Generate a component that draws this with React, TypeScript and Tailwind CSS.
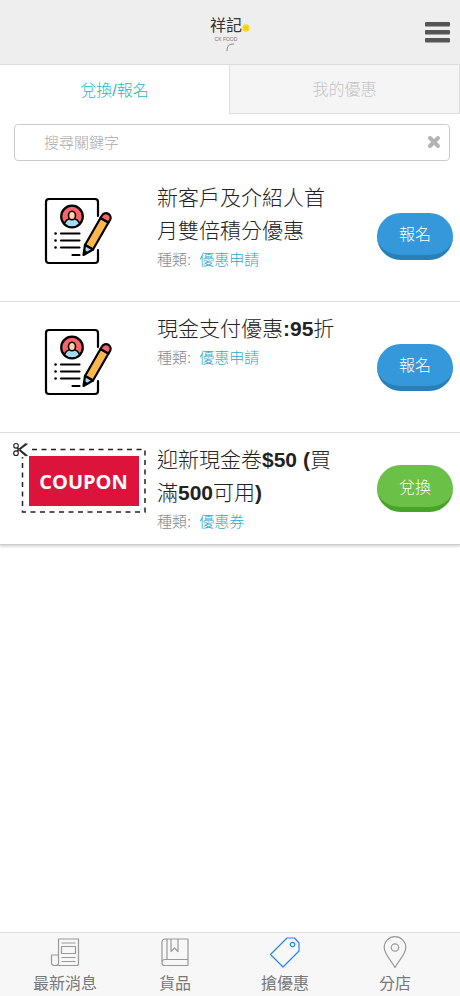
import type { ReactNode } from 'react';

interface Offer {
  id: number;
  title: string;
  category: string;
  action: string;
  kind: 'form' | 'coupon';
}

const offers: Offer[] = [
  { id: 1, title: '新客戶及介紹人首月雙倍積分優惠', category: '優惠申請', action: '報名', kind: 'form' },
  { id: 2, title: '現金支付優惠:95折', category: '優惠申請', action: '報名', kind: 'form' },
  { id: 3, title: '迎新現金卷$50 (買滿500可用)', category: '優惠券', action: '兌換', kind: 'coupon' },
];

function Logo() {
  return (
    <div className="relative mt-2 flex flex-col items-center pr-2">
      <span className="text-base leading-4 font-normal text-[#333]">祥記</span>
      <span className="mt-0.5 text-[5px] leading-[6px] text-[#777]">CK FOOD</span>
      <svg className="h-3 w-8" viewBox="0 0 32 12" fill="none" stroke="#888">
        <path d="M17 9c0-5 2-7 7-7" />
      </svg>
      <svg className="absolute top-1.5 right-0 h-2 w-2" viewBox="0 0 8 8">
        <circle cx="4" cy="4" r="3.7" fill="#fadb1e" />
        <path d="M2 3h4M2.5 5h3M3 3v3M5 3v3" stroke="#e5b800" strokeWidth=".5" />
      </svg>
    </div>
  );
}

function FormIcon() {
  return (
    <svg className="h-[68px] w-[68px]" viewBox="0 0 68 68" fill="none" stroke="#000" strokeWidth="2.2" strokeLinecap="round" strokeLinejoin="round">
      <path d="M54 19V5a3 3 0 0 0-3-3H5a3 3 0 0 0-3 3v58a3 3 0 0 0 3 3h46a3 3 0 0 0 3-3V53" />
      <circle cx="28" cy="19.5" r="10.8" fill="#f8646a" />
      <path d="M20.5 27c1-4 4-5.5 7.5-5.5s6.500 1.500 7.500 5.500c-4 4-11 4-15 0z" fill="#a5dbf5" strokeWidth="1.6" />
      <ellipse cx="28" cy="18.5" rx="3.5" ry="4.3" fill="#ffd5a5" strokeWidth="1.6" />
      <path d="M17 36.5h18.5M17 43.5h18.5M17 50.5h18.5M28.5 58h7" />
      <path d="M11.5 36.5h.1M11.5 43.5h.1M11.5 50.5h.1" strokeWidth="2.6" />
      <path d="M41 48l15.5-27 8 4.5-15.5 27z" fill="#fab84c" />
      <path d="M56.5 21l1.5-2.5a4.5 4.500 0 0 1 8 4.500L64.500 25.500z" fill="#f8646a" />
      <path d="M41 48l-1.5 10 9.5-5.5z" fill="#a5dbf5" />
      <path d="M39.8 57.5l1-4 2.5 2z" fill="#000" strokeWidth="1" />
    </svg>
  );
}

function CouponIcon() {
  return (
    <svg className="h-[74px] w-[136px]" viewBox="0 0 136 74" fill="none">
      <rect x="10.5" y="8.5" width="122.5" height="62.5" stroke="#222" strokeWidth="1.5" strokeDasharray="5 4.5" />
      <rect width="18" height="16" fill="#fff" />
      <rect x="17" y="15" width="110" height="50" fill="#dc143c" />
      <text x="71.5" y="47.5" fill="#fff" fontFamily="Open Sans" fontSize="20" fontWeight="700" textAnchor="middle">
        COUPON
      </text>
      <circle cx="4" cy="4.8" r="2.3" stroke="#222" strokeWidth="1.1" />
      <circle cx="4" cy="12.2" r="2.3" stroke="#222" strokeWidth="1.1" />
      <path d="M5.5 6.5L15.5 14.5l-2.3.3L5 7.5zM5.5 10.5L15.500 3l-2.300-.3L5 9.500z" fill="#222" stroke="#222" strokeWidth=".7" />
    </svg>
  );
}

/* Latin letters and digits are bold, the Chinese stays light */
function OfferTitle({ text }: { text: string }) {
  const parts = text.match(/[\x21-\x7e]+|\s|[^\x00-\x7f]/g) ?? [];
  return (
    <h2 className="text-[21px] leading-[33px] text-[#222]">
      {parts.map((part, i) => (
        <span key={i} className={/[\x20-\x7e]/.test(part) ? 'font-bold' : undefined}>
          {part}
        </span>
      ))}
    </h2>
  );
}

function OfferRow({ offer }: { offer: Offer }) {
  const isForm = offer.kind === 'form';
  return (
    <li className={`flex border-[#ddd] pr-[7px] ${isForm ? 'min-h-[131px] border-b' : ''}`}>
      <div className={`w-[157px] shrink-0 ${isForm ? 'pt-[26px] pl-11' : 'pt-2 pl-3'}`}>
        {isForm ? <FormIcon /> : <CouponIcon />}
      </div>
      <div className="min-w-0 flex-1 pt-[10px] pr-10 pb-[9px]">
        <OfferTitle text={offer.title} />
        <p className="text-[15px] leading-[26px] text-[#888]">
          種類:{' '}
          <a href="#" className="ml-1 text-[#2fa8cc]">
            {offer.category}
          </a>
        </p>
      </div>
      <button
        className={`h-[47px] w-[76px] shrink-0 self-center rounded-[24px] border-b-[5px] pt-[3px] text-base text-white ${
          isForm ? 'border-[#2980b9] bg-[#3498db]' : 'border-[#46a528] bg-[#6bc048]'
        }`}
      >
        {offer.action}
      </button>
    </li>
  );
}

function NavItem({ label, active, children }: { label: string; active?: boolean; children: ReactNode }) {
  return (
    <a href="#" className="flex flex-1 flex-col items-center pt-[3px] text-base text-[#777]">
      <svg
        className={`h-8 w-8 shrink-0 ${active ? 'text-[#2788e8]' : 'text-[#999]'}`}
        viewBox="0 0 32 32"
        fill="none"
        stroke="currentColor"
        strokeWidth="1.2"
        strokeLinejoin="round"
      >
        {children}
      </svg>
      <span className="mt-1 leading-6 font-normal">{label}</span>
    </a>
  );
}

export default function App() {
  return (
    <div className="flex min-h-screen flex-col bg-white font-['Liberation_Sans','Noto_Sans_CJK_TC',sans-serif] font-light">
      <header className="grid h-[65px] grid-cols-[1fr_auto_1fr] items-center border-b border-[#ddd] bg-[#eee] px-[10px]">
        <div />
        <Logo />
        <button aria-label="選單" className="justify-self-end">
          <svg className="h-[21px] w-[25px]" viewBox="0 0 25 21" fill="#555">
            <rect y="0" width="25" height="4.5" rx="1" />
            <rect y="8" width="25" height="4.5" rx="1" />
            <rect y="16" width="25" height="4.5" rx="1" />
          </svg>
        </button>
      </header>

      <main className="flex-1">
        <div role="tablist" className="flex h-[49px]">
          <button role="tab" aria-selected="true" className="flex-1 pt-0.5 text-base text-[#1cb8c8]">
            兌換/報名
          </button>
          <button role="tab" aria-selected="false" className="flex-1 border border-t-0 border-[#ddd] bg-[#f5f5f5] pt-0.5 text-base text-[#c4c4c4]">
            我的優惠
          </button>
        </div>

        <div className="relative mt-[10px] mr-[10px] ml-[14px]">
          <input
            type="text"
            aria-label="搜尋關鍵字"
            placeholder="搜尋關鍵字"
            className="h-[37px] w-full rounded border border-[#ccc] px-[29px] text-[15px] placeholder:text-[#aaa]"
          />
          <button aria-label="清除" className="absolute top-[11px] right-[9px]">
            <svg className="h-[14px] w-[14px]" viewBox="0 0 14 14" stroke="#b3b3b3" strokeWidth="4" strokeLinecap="round">
              <path d="M3 3l8 8M11 3l-8 8" />
            </svg>
          </button>
        </div>

        <ul className="mt-[10px] border-b border-[#ccc] shadow-[0_2px_2px_#ddd]">
          {offers.map((offer) => (
            <OfferRow key={offer.id} offer={offer} />
          ))}
        </ul>
      </main>

      <nav className="sticky bottom-0 flex h-16 border-t border-[#ddd] bg-[#f7f7f7] px-[10px]">
        <NavItem label="最新消息">
          <path d="M9.5 27V3h20v24.5a2 2 0 0 1-2 2h-20M9.5 19h-7v8a3.500 2.500 0 0 0 7 0M12.500 7h14M12.500 21.500h14M12.500 25.500h14M12.500 10.500h14v7h-14z" />
        </NavItem>
        <NavItem label="貨品">
          <path d="M29 23.5V3H6a3 3 0 0 0-3 3v21a2.500 2.500 0 0 0 2.500 2.500H29v-6H6a3 3 0 0 0-3 3M8 3v20.500M12 3v12.500l3.500-3.500 3.500 3.500V3" />
        </NavItem>
        <NavItem label="搶優惠" active>
          <path d="M1.5 18.5L18 2h7.500l4.500 5v8L14 31z" />
          <circle cx="23.5" cy="8.5" r="2.2" />
        </NavItem>
        <NavItem label="分店">
          <path d="M16 31.5C12 24 5.200 18 5.200 11.500a10.800 10.800 0 0 1 21.600 0C26.800 18 20 24 16 31.500z" />
          <circle cx="16" cy="11.5" r="3.7" />
        </NavItem>
      </nav>
    </div>
  );
}
